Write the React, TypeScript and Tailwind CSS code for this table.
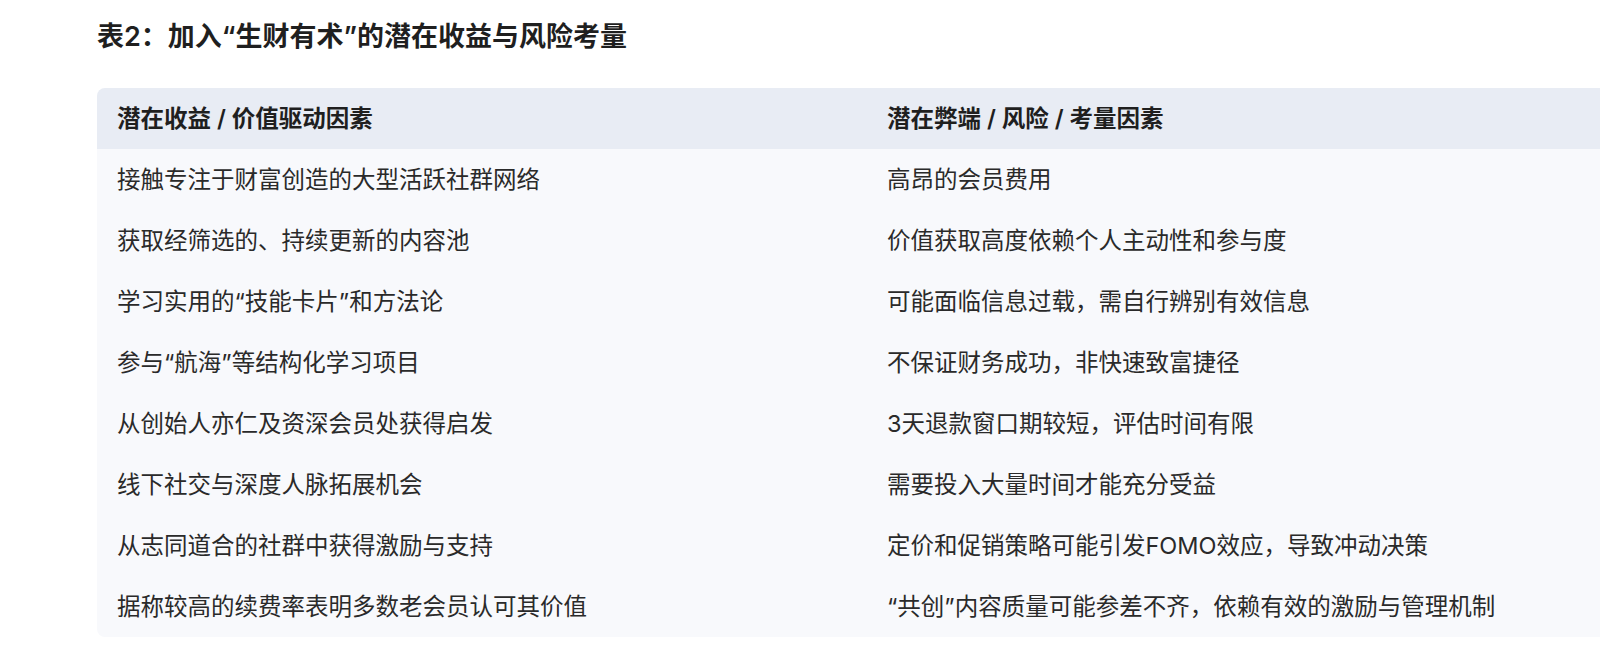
const rows: [string, string][] = [
  ['接触专注于财富创造的大型活跃社群网络', '高昂的会员费用'],
  ['获取经筛选的、持续更新的内容池', '价值获取高度依赖个人主动性和参与度'],
  ['学习实用的“技能卡片”和方法论', '可能面临信息过载，需自行辨别有效信息'],
  ['参与“航海”等结构化学习项目', '不保证财务成功，非快速致富捷径'],
  ['从创始人亦仁及资深会员处获得启发', '3天退款窗口期较短，评估时间有限'],
  ['线下社交与深度人脉拓展机会', '需要投入大量时间才能充分受益'],
  ['从志同道合的社群中获得激励与支持', '定价和促销策略可能引发FOMO效应，导致冲动决策'],
  ['据称较高的续费率表明多数老会员认可其价值', '“共创”内容质量可能参差不齐，依赖有效的激励与管理机制'],
]

export default function App() {
  return (
    <div className="w-full h-[670px] overflow-hidden bg-white font-['Inter','Noto_Sans_CJK_SC',sans-serif]">
      <div className="pl-[97px] pt-[19px]">
        <h2 className="text-[27px] leading-[36px] font-semibold text-[#1f1f1f]">
          表2：加入“生财有术”的潜在收益与风险考量
        </h2>

        <div className="mt-[33px] w-[1540px] rounded-[8px] overflow-hidden">
          {/* header */}
          <div className="grid grid-cols-2 h-[61px] items-center bg-[#e8ecf4] text-[23.5px] font-semibold text-[#1f1f1f]">
            <div className="px-[20px]">潜在收益 / 价值驱动因素</div>
            <div className="px-[20px]">潜在弊端 / 风险 / 考量因素</div>
          </div>

          {/* body */}
          <div className="bg-[#f8f9fc]">
            {rows.map(([gain, risk]) => (
              <div
                key={gain}
                className="grid grid-cols-2 h-[61px] items-center text-[23.5px] text-[#2a2a2a]"
              >
                <div className="px-[20px]">{gain}</div>
                <div className="px-[20px]">{risk}</div>
              </div>
            ))}
          </div>
        </div>
      </div>
    </div>
  )
}
